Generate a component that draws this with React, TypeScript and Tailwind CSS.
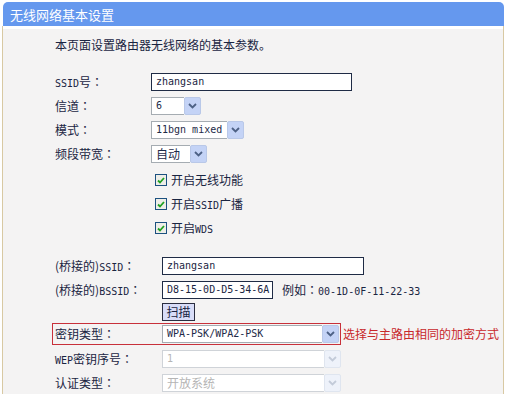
import React from 'react';

// 等宽拉丁字符（模拟宋体半角）
const M: React.FC<{ children: React.ReactNode }> = ({ children }) => (
  <span className="font-['DejaVu_Sans_Mono',monospace] text-[10px]">{children}</span>
);

// 居中的全角冒号
const C = () => <span className="font-['Noto_Sans_CJK_TC',sans-serif]">：</span>;

const Chevron: React.FC<{ disabled?: boolean }> = ({ disabled }) => (
  <svg width="9" height="6" viewBox="0 0 9 6">
    <path
      d="M1 1 L4.5 4.5 L8 1"
      fill="none"
      stroke={disabled ? '#c3cbd9' : '#4d6185'}
      strokeWidth="1.8"
    />
  </svg>
);

interface SelectProps {
  width: string;
  value: React.ReactNode;
  disabled?: boolean;
}

const Select: React.FC<SelectProps> = ({ width, value, disabled }) => (
  <div className={`flex h-[18px] ${width}`}>
    <div
      className={`flex flex-1 items-center border border-r-0 pl-[4px] ${
        disabled ? 'border-[#cfd3d8] bg-white text-[#b5b5b5]' : 'border-[#a5acb2] bg-white text-[#1e2a48]'
      }`}
    >
      {value}
    </div>
    <div
      className={`flex w-[17px] items-center justify-center rounded-[2px] border ${
        disabled ? 'border-[#dfe5ef] bg-[#eef2fa]' : 'border-[#b9c8e8] bg-[#c4d3f6]'
      }`}
    >
      <Chevron disabled={disabled} />
    </div>
  </div>
);

const Checkbox: React.FC<{ label: React.ReactNode }> = ({ label }) => (
  <div className="flex h-6 items-center pl-[4px]">
    <div className="flex h-[12px] w-[12px] items-center justify-center border border-[#1c5180] bg-[#eeeee8]">
      <svg width="8" height="7" viewBox="0 0 8 7">
        <path d="M1 3.5 L3 5.5 L7 1" fill="none" stroke="#21a121" strokeWidth="1.8" />
      </svg>
    </div>
    <span className="ml-[4px]">{label}</span>
  </div>
);

interface RowProps {
  label?: React.ReactNode;
  labelW: string;
  children?: React.ReactNode;
}

const Row: React.FC<RowProps> = ({ label, labelW, children }) => (
  <div className="flex h-6 items-center">
    <div className={`shrink-0 ${labelW}`}>{label}</div>
    <div className="flex items-center">{children}</div>
  </div>
);

const TextInput: React.FC<{ width: string; value: string }> = ({ width, value }) => (
  <div className={`flex h-[18px] items-center border border-[#1f2b45] bg-white pl-[4px] ${width}`}>
    <M>{value}</M>
  </div>
);

export default function App() {
  return (
    <div className="h-[394px] w-[507px] overflow-hidden bg-white font-['Noto_Sans_CJK_SC',sans-serif] text-[12px] leading-none text-[#1a2542]">
      <div className="w-[504px] pl-[2px] pt-[2px]">
        {/* 标题栏 */}
        <div className="ml-px flex h-6 items-center rounded-t-[5px] bg-[#6598ee] pl-[7px] text-[13px] text-white">
          无线网络基本设置
        </div>

        {/* 内容区 */}
        <div className="h-[400px] border-x border-[#d8c9a3] bg-[#f4f3f3]">
          <div className="h-[3px] bg-white" />
          <div className="pl-[52px]">
            <div className="mt-[4px] flex h-6 items-center">本页面设置路由器无线网络的基本参数。</div>

            <div className="mt-[13px]">
              <Row labelW="w-[96px]" label={<><M>SSID</M>号<C /></>}>
                <TextInput width="w-[201px]" value="zhangsan" />
              </Row>
              <Row labelW="w-[96px]" label={<>信道<C /></>}>
                <Select width="w-[50px]" value={<M>6</M>} />
              </Row>
              <Row labelW="w-[96px]" label={<>模式<C /></>}>
                <Select width="w-[93px]" value={<M>11bgn mixed</M>} />
              </Row>
              <Row labelW="w-[96px]" label={<>频段带宽<C /></>}>
                <Select width="w-[56px]" value="自动" />
              </Row>
            </div>

            <div className="mt-[2px] pl-[96px]">
              <Checkbox label="开启无线功能" />
              <Checkbox label={<>开启<M>SSID</M>广播</>} />
              <Checkbox label={<>开启<M>WDS</M></>} />
            </div>

            <div className="mt-[14px]">
              <Row labelW="w-[107px]" label={<>(桥接的)<M>SSID</M><C /></>}>
                <TextInput width="w-[202px]" value="zhangsan" />
              </Row>
              <Row labelW="w-[107px]" label={<>(桥接的)<M>BSSID</M><C /></>}>
                <TextInput width="w-[111px]" value="D8-15-0D-D5-34-6A" />
                <span className="ml-[9px]">
                  例如<C />
                  <M>00-1D-0F-11-22-33</M>
                </span>
              </Row>
              <div className="flex h-5 items-center pl-[107px]">
                <button className="flex h-[18px] w-[33px] items-center justify-center border border-[#2a2d40] bg-[#d9ddf8] text-[12px] text-[#1a2542]">
                  扫描
                </button>
              </div>

              {/* 密钥类型（红框标注） */}
              <div className="-ml-[3px] mt-px flex items-center">
                <div className="flex h-[22px] w-[289px] items-center border border-[#c8303a] pl-[2px]">
                  <div className="w-[107px] shrink-0">
                    密钥类型<C />
                  </div>
                  <Select width="w-[177px]" value={<M>WPA-PSK/WPA2-PSK</M>} />
                </div>
                <span className="ml-[2px] text-[#c8282b]">选择与主路由相同的加密方式</span>
              </div>

              <div className="mt-[2px]">
                <Row labelW="w-[107px]" label={<><M>WEP</M>密钥序号<C /></>}>
                  <Select width="w-[179px]" value={<M>1</M>} disabled />
                </Row>
                <Row labelW="w-[107px]" label={<>认证类型<C /></>}>
                  <Select width="w-[179px]" value="开放系统" disabled />
                </Row>
              </div>
            </div>
          </div>
        </div>
      </div>
    </div>
  );
}
